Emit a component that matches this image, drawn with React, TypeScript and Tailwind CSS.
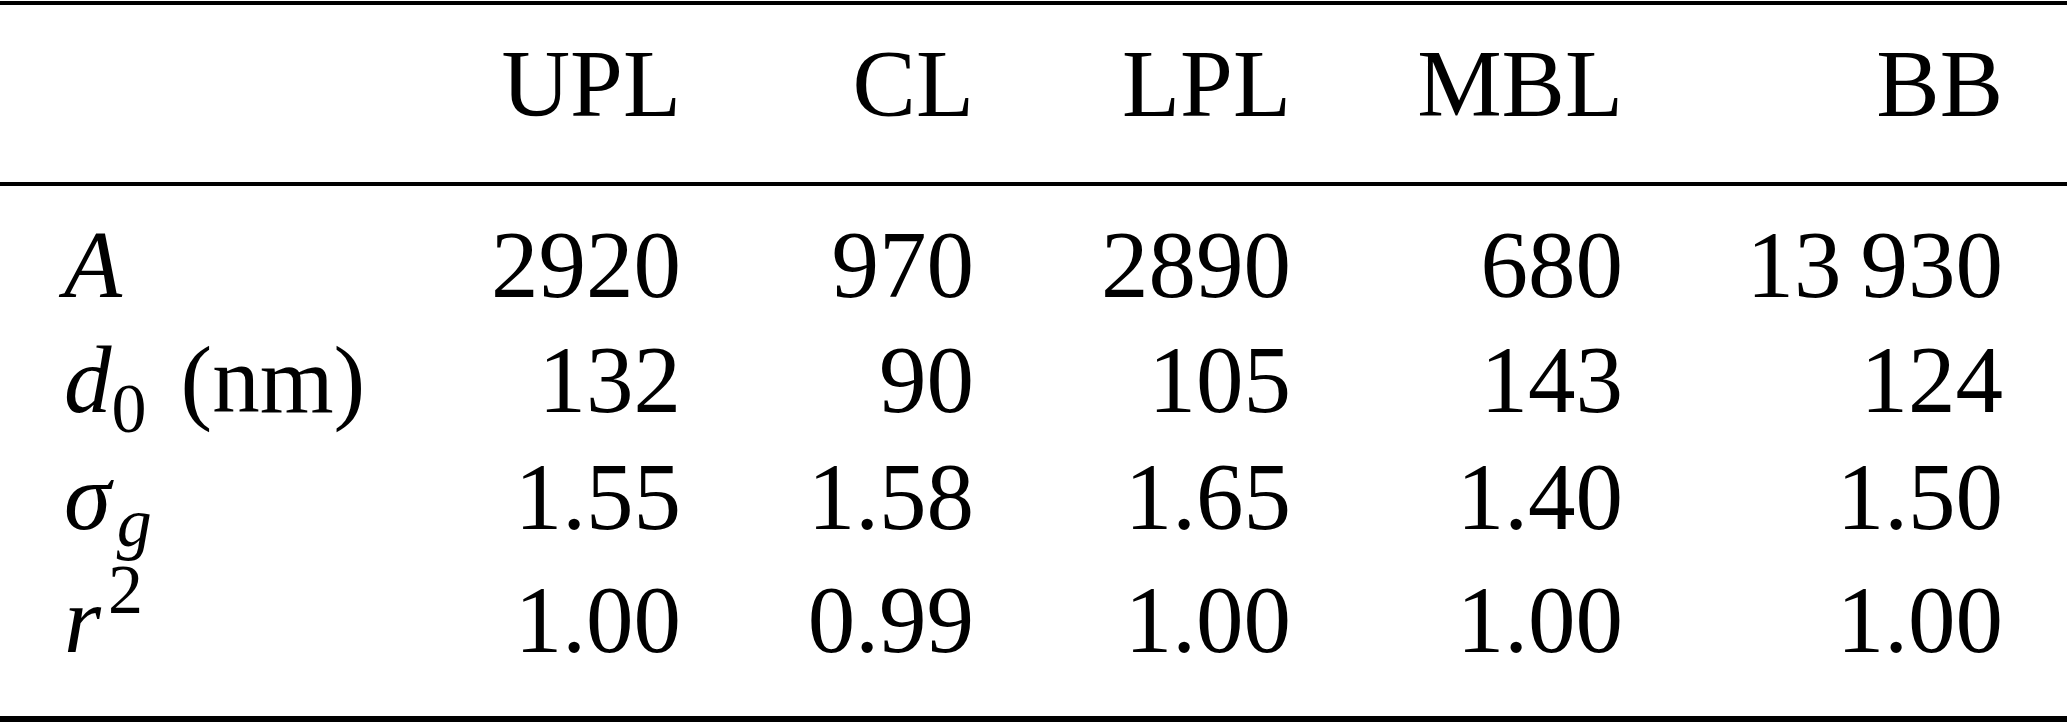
import React from "react";

type Row = { label: React.ReactNode; vals: string[]; h: string };

const rows: Row[] = [
  { label: <i>A</i>, vals: ["2920", "970", "2890", "680", "13\u2009930"], h: "h-[115px]" },
  {
    label: (
      <>
        <i>d</i>
        <sub className="bottom-[-20px] text-[70px] not-italic">0</sub>
        <span className="ml-[34px]">(nm)</span>
      </>
    ),
    vals: ["132", "90", "105", "143", "124"],
    h: "h-[117px]",
  },
  {
    label: (
      <>
        <i>σ</i>
        <sub className="bottom-[-17px] text-[70px] italic ml-[6px]">g</sub>
      </>
    ),
    vals: ["1.55", "1.58", "1.65", "1.40", "1.50"],
    h: "h-[123px]",
  },
  {
    label: (
      <>
        <i>r</i>
        <sup className="top-[-39px] text-[70px] ml-[7px]">2</sup>
      </>
    ),
    vals: ["1.00", "0.99", "1.00", "1.00", "1.00"],
    h: "h-[143px]",
  },
];

const header = ["UPL", "CL", "LPL", "MBL", "BB"];

const gridCols = "grid grid-cols-[400px_281px_293px_317px_332px_380px]";

export default function App() {
  return (
    <div className="w-[2067px] h-[722px] bg-white text-black font-['Liberation_Serif','Times_New_Roman',serif] text-[95px] leading-[95px] overflow-hidden">
      <div className="mt-[1px] h-[4px] bg-black" />
      <div className={`${gridCols} h-[177px] pt-[31.5px]`}>
        <div />
        {header.map((h) => (
          <div key={h} className="text-right whitespace-nowrap">
            {h}
          </div>
        ))}
      </div>
      <div className="h-[3.5px] bg-black" />
      <div className="pt-[32px]">
        {rows.map((r, i) => (
          <div key={i} className={`${gridCols} ${r.h}`}>
            <div className="pl-[64px] whitespace-nowrap">{r.label}</div>
            {r.vals.map((v, j) => (
              <div key={j} className="text-right whitespace-nowrap">
                {v}
              </div>
            ))}
          </div>
        ))}
      </div>
      <div className="h-[6px] bg-black" />
    </div>
  );
}
